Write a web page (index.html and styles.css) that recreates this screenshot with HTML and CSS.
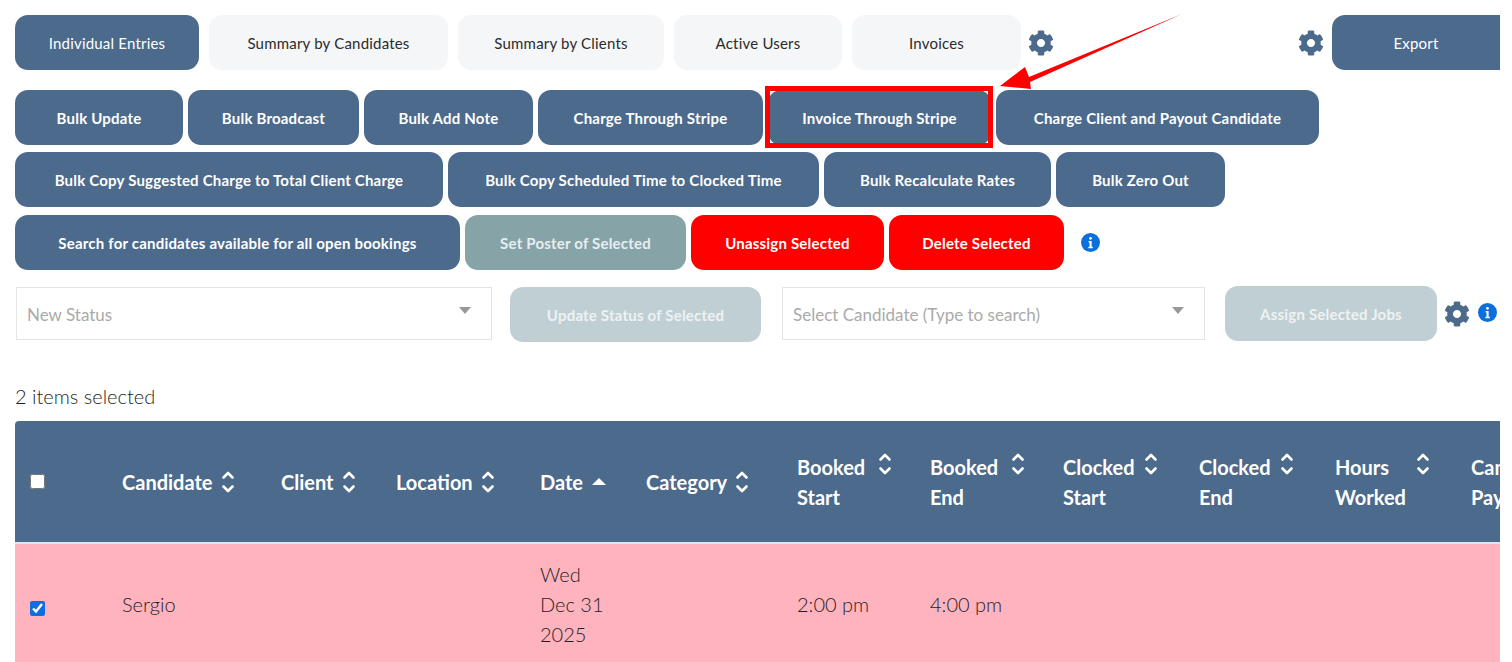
FILE: index.html
```html
<!DOCTYPE html>
<html lang="en">
<head>
  <meta charset="UTF-8" />
  <title>Bookings</title>
  <link rel="stylesheet" href="styles.css">
</head>
<body>
  <svg class="icon-defs" width="0" height="0">
    <symbol id="cog" viewBox="0 0 512 512">
      <path d="M487.4 315.7l-42.6-24.6c4.3-23.2 4.3-47 0-70.2l42.6-24.6c4.9-2.8 7.1-8.6 5.5-14-11.1-35.6-30-67.8-54.7-94.6-3.8-4.1-10-5.1-14.8-2.3L380.8 110c-17.9-15.4-38.5-27.3-60.8-35.1V25.8c0-5.6-3.9-10.5-9.4-11.7-36.7-8.2-74.3-7.8-109.2 0-5.5 1.2-9.4 6.1-9.4 11.7V75c-22.2 7.9-42.8 19.8-60.8 35.1L88.7 85.5c-4.9-2.8-11-1.9-14.8 2.3-24.7 26.7-43.6 58.9-54.7 94.6-1.7 5.4.6 11.2 5.5 14L67.3 221c-4.3 23.2-4.3 47 0 70.2l-42.6 24.6c-4.9 2.8-7.1 8.6-5.5 14 11.1 35.6 30 67.8 54.7 94.6 3.8 4.1 10 5.1 14.8 2.3l42.6-24.6c17.9 15.4 38.5 27.3 60.8 35.1v49.2c0 5.6 3.9 10.5 9.4 11.7 36.7 8.2 74.3 7.8 109.2 0 5.5-1.2 9.4-6.1 9.4-11.7v-49.2c22.2-7.9 42.8-19.8 60.8-35.1l42.6 24.6c4.9 2.8 11 1.9 14.8-2.3 24.7-26.7 43.6-58.9 54.7-94.6 1.5-5.5-.7-11.3-5.6-14.1zM256 336c-44.1 0-80-35.9-80-80s35.9-80 80-80 80 35.9 80 80-35.9 80-80 80z"/>
    </symbol>
    <symbol id="info" viewBox="0 0 20 20">
      <circle cx="10" cy="10" r="10" fill="#0c6fdc"/>
      <circle cx="10" cy="5.6" r="1.5" fill="#fff"/>
      <path d="M8 8.5h3.2v6H12.4v1.5H7.8v-1.5H9v-4.5H8z" fill="#fff"/>
    </symbol>
    <symbol id="sort" viewBox="0 0 14 24">
      <path d="M2.5 7.5L7 3l4.500 4.500M2.500 16.500L7 21l4.500-4.500" fill="none" stroke="#fff" stroke-width="2.600" stroke-linecap="round" stroke-linejoin="round"/>
    </symbol>
  </svg>

  <div class="page">
    <div class="tabs-row">
      <div class="tabs">
        <a class="btn btn-primary">Individual Entries</a>
        <a class="btn btn-tab">Summary by Candidates</a>
        <a class="btn btn-tab">Summary by Clients</a>
        <a class="btn btn-tab">Active Users</a>
        <a class="btn btn-tab">Invoices</a>
      </div>
      <svg class="cog"><use href="#cog"/></svg>
      <div class="export-group">
        <svg class="cog"><use href="#cog"/></svg>
        <a class="btn btn-primary btn-export">Export</a>
      </div>
    </div>

    <div class="actions actions-1">
      <a class="btn btn-primary">Bulk Update</a>
      <a class="btn btn-primary">Bulk Broadcast</a>
      <a class="btn btn-primary">Bulk Add Note</a>
      <a class="btn btn-primary">Charge Through Stripe</a>
      <a class="btn btn-primary">Invoice Through Stripe</a>
      <a class="btn btn-primary">Charge Client and Payout Candidate</a>
    </div>
    <div class="actions actions-2">
      <a class="btn btn-primary">Bulk Copy Suggested Charge to Total Client Charge</a>
      <a class="btn btn-primary">Bulk Copy Scheduled Time to Clocked Time</a>
      <a class="btn btn-primary">Bulk Recalculate Rates</a>
      <a class="btn btn-primary">Bulk Zero Out</a>
    </div>
    <div class="actions actions-3">
      <a class="btn btn-primary">Search for candidates available for all open bookings</a>
      <a class="btn btn-muted">Set Poster of Selected</a>
      <a class="btn btn-danger">Unassign Selected</a>
      <a class="btn btn-danger">Delete Selected</a>
      <svg class="info info-bulk"><use href="#info"/></svg>
    </div>

    <div class="assign-row">
      <div class="select select-status">New Status<span class="select-caret"></span></div>
      <a class="btn btn-disabled btn-update">Update Status of Selected</a>
      <div class="select select-candidate">Select Candidate (Type to search)<span class="select-caret"></span></div>
      <a class="btn btn-disabled btn-assign">Assign Selected Jobs</a>
      <svg class="cog"><use href="#cog"/></svg>
      <svg class="info"><use href="#info"/></svg>
    </div>

    <p class="selected-count">2 items selected</p>

    <table class="bookings">
      <colgroup>
        <col class="c-check"><col class="c-candidate"><col class="c-client"><col class="c-location"><col class="c-date"><col class="c-category">
        <col class="c-time"><col class="c-time"><col class="c-clock"><col class="c-clock"><col class="c-clock"><col class="c-pay">
      </colgroup>
      <thead>
        <tr>
          <th><input type="checkbox" class="check"></th>
          <th><div class="th-in">Candidate<svg class="sort"><use href="#sort"/></svg></div></th>
          <th><div class="th-in">Client<svg class="sort"><use href="#sort"/></svg></div></th>
          <th><div class="th-in">Location<svg class="sort"><use href="#sort"/></svg></div></th>
          <th><div class="th-in">Date<span class="sort-asc"></span></div></th>
          <th><div class="th-in">Category<svg class="sort"><use href="#sort"/></svg></div></th>
          <th><div class="th-in"><span class="th-two">Booked Start</span><svg class="sort"><use href="#sort"/></svg></div></th>
          <th><div class="th-in"><span class="th-two">Booked End</span><svg class="sort"><use href="#sort"/></svg></div></th>
          <th><div class="th-in"><span class="th-two">Clocked Start</span><svg class="sort"><use href="#sort"/></svg></div></th>
          <th><div class="th-in"><span class="th-two">Clocked End</span><svg class="sort"><use href="#sort"/></svg></div></th>
          <th><div class="th-in"><span class="th-two">Hours Worked</span><svg class="sort"><use href="#sort"/></svg></div></th>
          <th><div class="th-in"><span class="th-two">Candidate Pay</span></div></th>
        </tr>
      </thead>
      <tbody>
        <tr>
          <td class="td-check"><input type="checkbox" class="check" checked></td>
          <td>Sergio</td>
          <td></td>
          <td></td>
          <td>Wed<br>Dec 31<br>2025</td>
          <td></td>
          <td>2:00 pm</td>
          <td>4:00 pm</td>
          <td></td><td></td><td></td><td></td>
        </tr>
      </tbody>
    </table>

    <!-- annotation drawn over the screenshot -->
    <div class="callout-box"></div>
    <svg class="callout-arrow" width="200" height="90" viewBox="0 0 200 90">
      <polygon points="182,0 29,63 25,53 0,72 31,75 30,68" fill="#f00"/>
    </svg>
  </div>
</body>
</html>
```

FILE: styles.css
```css
* {
  box-sizing: border-box;
}

body {
  margin: 0;
  background: #fff;
  font-family: "Lato", "Open Sans", sans-serif;
  color: #1f1f1f;
}

.icon-defs {
  position: absolute;
}

.page {
  position: relative;
  width: 1500px;
  height: 662px;
  padding: 15px 0 0 15px;
  overflow: hidden;
}

.btn {
  display: flex;
  align-items: center;
  justify-content: center;
  height: 55px;
  border-radius: 13px;
  font-size: 15px;
  font-weight: 700;
  letter-spacing: 0.2px;
  white-space: nowrap;
}

.btn-primary { background: #4c6a8c; color: #fff; }
.btn-tab { background: #f5f6f8; color: #2b2b2b; font-weight: 400; }
.btn-muted { background: #86a3a8; color: #e8eeef; }
.btn-danger { background: #f00; color: #fff; }
.btn-disabled { background: #c0cfd3; color: #eef2f3; }

.tabs-row {
  display: flex;
  align-items: center;
}

.tabs {
  display: grid;
  grid-template-columns: 184px 239px 206px 168px 169px;
  gap: 10px;
}

.tabs .btn-primary { font-weight: 400; }

.cog {
  width: 26px;
  height: 26px;
  fill: #4c6a8c;
  flex: none;
}

.tabs-row > .cog {
  margin-left: 7px;
}

.export-group {
  display: flex;
  align-items: center;
  gap: 8px;
  margin-left: auto;
}

.btn-export {
  width: 168px;
  font-weight: 400;
  border-radius: 13px 0 0 13px;
}

.actions {
  display: grid;
  gap: 5px;
  margin-top: 7px;
}

.actions-1 {
  grid-template-columns: 168px 171px 169px 225px 223px 323px;
  margin-top: 20px;
}

.actions-2 {
  grid-template-columns: 428px 371px 227px 169px;
}

.actions-3 {
  grid-template-columns: 445px 221px 193px 175px 19px;
  margin-top: 8px;
  align-items: center;
}

.info {
  width: 19px;
  height: 19px;
  flex: none;
}

.info-bulk {
  margin-left: 12px;
}

.assign-row {
  display: flex;
  align-items: flex-start;
  margin-top: 17px;
  padding-left: 1px;
}

.select {
  display: flex;
  align-items: center;
  justify-content: space-between;
  height: 53px;
  padding: 2px 20px 0 10px;
  border: 1px solid #e4e4e4;
  font-size: 17px;
  color: #aaa;
}

.select-status { width: 476px; }
.select-candidate { width: 423px; margin-left: 21px; }

.select-caret {
  margin-bottom: 8px;
  border-left: 6.500px solid transparent;
  border-right: 6.500px solid transparent;
  border-top: 7px solid #999;
}

.btn-update { width: 251px; margin-left: 18px; }
.btn-assign { width: 212px; margin: -1px 0 0 20px; }

.assign-row .cog { margin: 14px 0 0 7px; }
.assign-row .info { margin: 16px 0 0 8px; }

.selected-count {
  margin: 42px 0 0;
  font-size: 20px;
  line-height: 24px;
  font-weight: 300;
}

.bookings {
  table-layout: fixed;
  width: 1530px;
  margin-top: 13px;
  border-collapse: collapse;
}

.c-check { width: 92px; }
.c-candidate { width: 159px; }
.c-client { width: 115px; }
.c-location { width: 144px; }
.c-date { width: 106px; }
.c-category { width: 151px; }
.c-time { width: 133px; }
.c-clock { width: 136px; }
.c-pay { width: 100px; }

.bookings thead tr {
  height: 122px;
  background: #4c6a8c;
  border-bottom: 2px solid #dfe6ec;
}

.bookings th {
  padding: 0 15px;
  color: #fff;
  font-size: 20px;
  line-height: 30px;
  font-weight: 700;
  text-align: left;
}

.bookings th:first-child {
  border-top-left-radius: 4px;
}

.th-in {
  display: flex;
  align-items: center;
}

.th-two {
  display: block;
  width: 73px;
}

.th-in:has(.th-two) {
  align-items: flex-start;
}

.sort {
  width: 14px;
  height: 24px;
  margin-left: 8px;
  flex: none;
}

.sort-asc {
  margin-left: 9px;
  border-left: 7px solid transparent;
  border-right: 7px solid transparent;
  border-bottom: 7px solid #fff;
}

.bookings tbody tr {
  height: 120px;
  background: #ffb3be;
}

.bookings td {
  padding: 15px;
  font-size: 20px;
  line-height: 30px;
  font-weight: 300;
  white-space: nowrap;
}

.check {
  display: block;
  width: 15px;
  height: 15px;
  margin: 0;
  accent-color: #0c6fdc;
}

.td-check .check {
  margin-top: 8px;
}

/* red annotation box + arrow */
.callout-box {
  position: absolute;
  left: 765px;
  top: 86px;
  width: 228px;
  height: 62px;
  border: 5px solid #f00;
}

.callout-arrow {
  position: absolute;
  left: 1000px;
  top: 14px;
}
```
